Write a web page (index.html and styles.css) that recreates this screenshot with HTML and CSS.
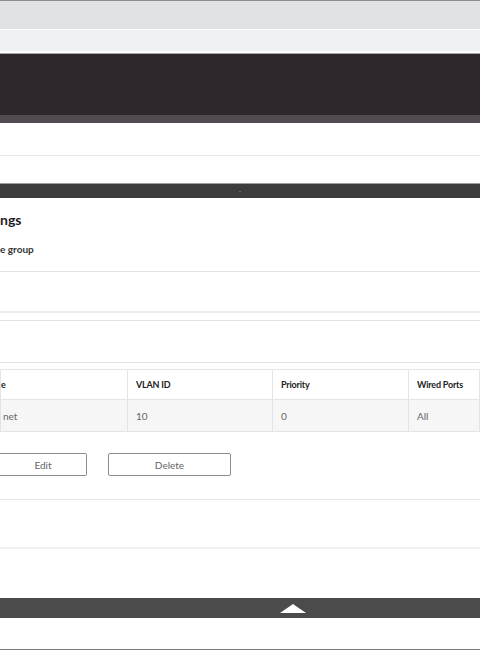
FILE: index.html
```html
<!DOCTYPE html>
<html lang="en">
<head>
  <meta charset="UTF-8" />
  <meta name="viewport" content="width=device-width, initial-scale=1.0" />
  <title>VLAN Settings</title>
  <link rel="stylesheet" href="styles.css">
</head>
<body>
  <!-- Barra del navegador -->
  <div class="tabbar"></div>
  <div class="urlbar"></div>

  <!-- Cabecera oscura de la app -->
  <header class="app-head"></header>
  <div class="app-sub"></div>

  <div class="subnav">
    <div class="subnav-row"></div>
    <div class="subnav-row short"></div>
  </div>
  <div class="strip"><span class="dot"></span></div>

  <!-- Contenido principal (la captura está recortada a la izquierda) -->
  <main class="content">
    <div class="page-head">
      <h1>ngs</h1>
      <p>e group</p>
    </div>

    <div class="blank"></div>
    <div class="blank second"></div>

    <table class="vlan-table">
      <thead>
        <tr>
          <th class="col-name">e</th>
          <th class="col-id">VLAN ID</th>
          <th class="col-pri">Priority</th>
          <th>Wired Ports</th>
        </tr>
      </thead>
      <tbody>
        <tr>
          <td class="cut">net</td>
          <td>10</td>
          <td>0</td>
          <td>All</td>
        </tr>
      </tbody>
    </table>

    <div class="actions">
      <button class="btn edit">Edit</button>
      <button class="btn">Delete</button>
    </div>
  </main>

  <div class="spacer"></div>
  <div class="spacer low"></div>

  <!-- Barra para volver arriba -->
  <div class="to-top"><span class="arrow"></span></div>
  <div class="bottom"></div>
</body>
</html>
```

FILE: styles.css
```css
*, *::before, *::after {
  box-sizing: border-box;
  margin: 0;
  padding: 0;
}

body {
  width: 480px;
  height: 650px;
  overflow: hidden;
  background: #fff;
  font-family: 'Lato', 'Liberation Sans', sans-serif;
  color: #222;
}

/* Navegador */
.tabbar {
  height: 30px;
  background: #e1e2e6;
  border-top: 1px solid #8d8d92;
  border-bottom: 1px solid #fff;
}
.urlbar {
  height: 24px;
  background: linear-gradient(#f0f1f3 0 21px, #fff 21px 23px, #a8a8ad 23px 24px);
}

/* Cabecera app */
.app-head {
  height: 61px;
  background: #2e272d;
}
.app-sub {
  height: 8px;
  background: #514c51;
}

.subnav-row {
  height: 33px;
  border-bottom: 1px solid #e7e7e7;
}
.subnav-row.short {
  height: 27px;
  border-bottom: 0;
}

.strip {
  display: flex;
  justify-content: center;
  align-items: center;
  height: 15px;
  background: #3c3c3c;
  border-top: 1px solid #9c9c9c;
}
.strip .dot {
  width: 2px;
  height: 1px;
  background: #666;
}

/* Contenido */
.page-head {
  padding: 12px 0 15px 0;
  border-bottom: 1px solid #e3e3e3;
}
.page-head h1 {
  font-size: 14px;
  line-height: 20px;
  font-weight: 700;
  color: #1e1e1e;
}
.page-head p {
  margin-top: 12px;
  font-size: 10px;
  line-height: 14px;
  font-weight: 700;
  color: #333;
}

.blank {
  height: 41px;
  border-bottom: 2px solid #ececec;
}
.blank.second {
  margin-top: 7px;
  height: 43px;
  border-top: 1px solid #e3e3e3;
  border-bottom: 1px solid #e3e3e3;
}

.vlan-table {
  margin-top: 6px;
  width: 100%;
  border-collapse: collapse;
  font-size: 9px;
}
.vlan-table th,
.vlan-table td {
  text-align: left;
  padding: 0 8px;
  border: 1px solid #e4e4e4;
}
.vlan-table th {
  height: 30px;
  font-weight: 700;
  color: #222;
  letter-spacing: -0.2px;
}
.vlan-table td {
  height: 32px;
  background: #f6f6f6;
  color: #666;
  font-size: 10px;
}
.vlan-table th.col-name {
  padding-left: 0;
}
.vlan-table td.cut {
  padding-left: 2px;
}
.col-name { width: 127px; }
.col-id { width: 145px; }
.col-pri { width: 136px; }

.actions {
  display: flex;
  gap: 21px;
  padding: 21px 0 23px 0;
  border-bottom: 1px solid #e6e6e6;
}
.btn {
  width: 123px;
  height: 23px;
  background: #fff;
  border: 1px solid #8c8c8c;
  border-radius: 2px;
  font-family: 'Lato', 'Liberation Sans', sans-serif;
  font-size: 10px;
  color: #666;
}
.btn.edit {
  width: 87px;
  padding-left: 0;
  border-left: 0;
  border-radius: 0 2px 2px 0;
}

.spacer {
  height: 49px;
  border-bottom: 2px solid #f0f0f0;
}
.spacer.low {
  height: 49px;
  border-bottom: 0;
}

.to-top {
  display: flex;
  align-items: center;
  height: 20px;
  padding-left: 280px;
  background: #4b4b4b;
}
.to-top .arrow {
  width: 0;
  height: 0;
  border-left: 13px solid transparent;
  border-right: 13px solid transparent;
  border-bottom: 9px solid #fff;
}

.bottom {
  height: 32px;
  border-bottom: 1px solid #7b7b7b;
}
```
